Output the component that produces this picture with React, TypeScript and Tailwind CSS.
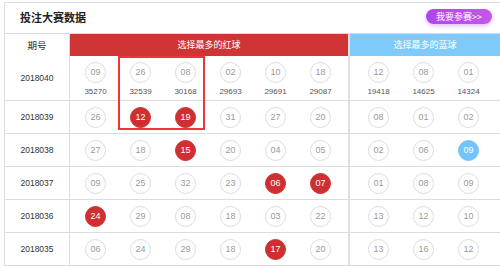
import React from "react";

// ─── Data ───────────────────────────────────────────────────────

type Ball = { n: string; hot?: boolean };
type Row = { period: string; red: Ball[]; blue: Ball[]; redCounts?: string[]; blueCounts?: string[] };

const b = (n: string, hot = false): Ball => ({ n, hot });

const ROWS: Row[] = [
  {
    period: "2018040",
    red: [b("09"), b("26"), b("08"), b("02"), b("10"), b("18")],
    blue: [b("12"), b("08"), b("01")],
    redCounts: ["35270", "32539", "30168", "29693", "29691", "29087"],
    blueCounts: ["19418", "14625", "14324"],
  },
  {
    period: "2018039",
    red: [b("26"), b("12", true), b("19", true), b("31"), b("27"), b("20")],
    blue: [b("08"), b("01"), b("02")],
  },
  {
    period: "2018038",
    red: [b("27"), b("18"), b("15", true), b("20"), b("04"), b("05")],
    blue: [b("02"), b("06"), b("09", true)],
  },
  {
    period: "2018037",
    red: [b("09"), b("25"), b("32"), b("23"), b("06", true), b("07", true)],
    blue: [b("01"), b("08"), b("09")],
  },
  {
    period: "2018036",
    red: [b("24", true), b("29"), b("08"), b("18"), b("03"), b("22")],
    blue: [b("13"), b("12"), b("10")],
  },
  {
    period: "2018035",
    red: [b("06"), b("24"), b("29"), b("18"), b("17", true), b("20")],
    blue: [b("13"), b("16"), b("12")],
  },
];

const CJK = "font-['Noto_Sans_CJK_SC','Noto_Sans',sans-serif]";

// ─── Pieces ─────────────────────────────────────────────────────

function BallCell({ ball, color, count }: { ball: Ball; color: "red" | "blue"; count?: string }) {
  const hotCls =
    color === "red"
      ? "bg-[#cf2f30] border-[#cf2f30] text-white"
      : "bg-[#72c5fb] border-[#72c5fb] text-white";
  return (
    <div className="w-[45px] flex flex-col items-center">
      <div
        className={`w-[21px] h-[21px] rounded-full border flex items-center justify-center text-[9px] leading-none font-['Liberation_Sans',sans-serif] ${
          ball.hot ? hotCls : "bg-white border-[#dcdcdc] text-[#9a9a9a]"
        }`}
      >
        {ball.n}
      </div>
      {count && (
        <div className="mt-[4px] text-[8px] leading-[10px] text-[#555] font-['Liberation_Sans',sans-serif]">
          {count}
        </div>
      )}
    </div>
  );
}

function TableRow({ row, first }: { row: Row; first: boolean }) {
  const h = first ? "h-[45px]" : "h-[33px]";
  const align = first ? "items-start pt-[6px]" : "items-center";
  return (
    <div className={`flex ${h} border-b border-[#dcdcdc]`}>
      <div className="w-[65px] shrink-0 border-r border-[#dcdcdc] flex items-center justify-center text-[8.5px] text-[#333] font-['Liberation_Sans',sans-serif]">
        {row.period}
      </div>
      <div className={`w-[278px] shrink-0 flex pl-[3px] ${align}`}>
        {row.red.map((ball, i) => (
          <BallCell key={i} ball={ball} color="red" count={row.redCounts?.[i]} />
        ))}
      </div>
      <div className={`flex-1 border-l-2 border-[#e0e0e0] flex pl-[6px] ${align}`}>
        {row.blue.map((ball, i) => (
          <BallCell key={i} ball={ball} color="blue" count={row.blueCounts?.[i]} />
        ))}
      </div>
    </div>
  );
}

// ─── App ────────────────────────────────────────────────────────

export default function App() {
  return (
    <div className="w-[500px] h-[267px] overflow-hidden bg-white pl-[4px] pt-[2px]">
      <div className="w-[496px] border-l border-t border-[#dcdcdc]">
        {/* Title bar */}
        <div className="h-[31px] flex items-center justify-between pl-[15px] pr-[8px] border-b border-[#dcdcdc]">
          <span className={`text-[11px] font-bold text-[#222] mb-[2px] ${CJK}`}>投注大赛数据</span>
          <button
            className={`h-[15px] w-[66px] mb-[4px] rounded-full bg-gradient-to-r from-[#b043f2] to-[#c857e6] text-white text-[9px] leading-none shadow-[0_2px_4px_rgba(176,70,240,0.35)] ${CJK}`}
          >
            我要参赛&gt;&gt;
          </button>
        </div>

        {/* Header */}
        <div className={`flex h-[22px] text-[9px] ${CJK}`}>
          <div className="w-[65px] shrink-0 border-r border-[#dcdcdc] flex items-center justify-center text-[#333] text-[9.5px]">
            期号
          </div>
          <div className="w-[278px] shrink-0 bg-[#d03536] text-white flex items-center justify-center">
            选择最多的红球
          </div>
          <div className="flex-1 border-l-2 border-[#e0e0e0] bg-[#7ecbfb] text-white flex items-center justify-center">
            选择最多的蓝球
          </div>
        </div>

        {/* Body */}
        <div className="relative">
          {ROWS.map((row, i) => (
            <TableRow key={row.period} row={row} first={i === 0} />
          ))}
          {/* Highlight box */}
          <div className="absolute left-[113px] top-0 w-[87px] h-[74px] border-2 border-[#f0343e] pointer-events-none" />
        </div>
      </div>
    </div>
  );
}
